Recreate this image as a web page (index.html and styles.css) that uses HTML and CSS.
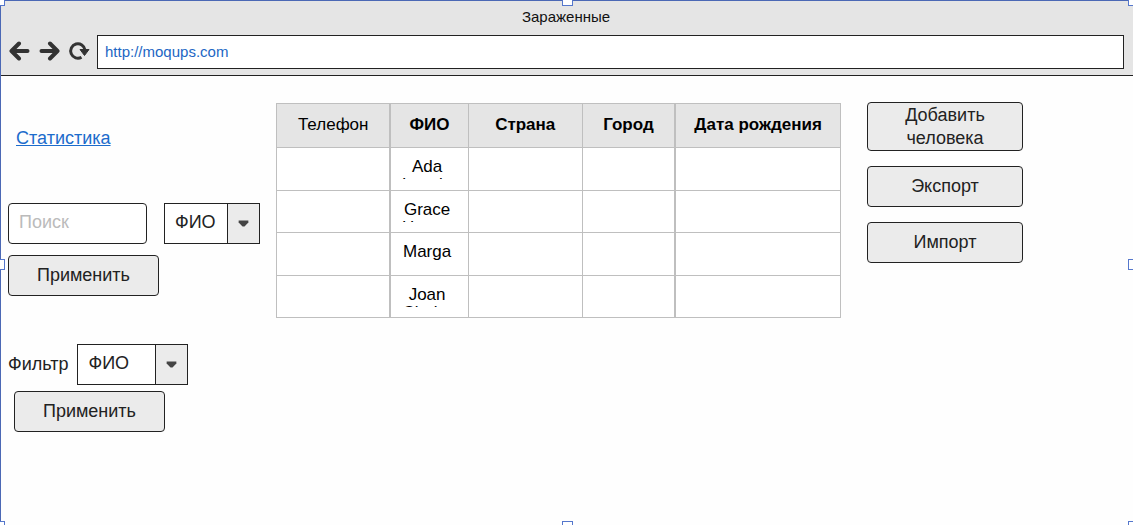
FILE: index.html
```html
<!DOCTYPE html>
<html lang="ru">
<head>
<meta charset="utf-8">
<meta name="viewport" content="width=device-width, initial-scale=1">
<title>Зараженные</title>
<link rel="stylesheet" href="styles.css">
</head>
<body>
<div class="window">
  <header class="browser">
    <h1 class="browser-title">Зараженные</h1>
    <div class="browser-bar">
      <nav class="browser-nav">
        <button class="icon-button" type="button" aria-label="Назад">
          <svg class="icon" viewBox="0 0 22 20"><path d="M19.500 10H4M11 2.500L3.500 10l7.500 7.500"/></svg>
        </button>
        <button class="icon-button" type="button" aria-label="Вперёд">
          <svg class="icon" viewBox="0 0 22 20"><path d="M3.500 10H19M12 2.500L19.500 10 12 17.500"/></svg>
        </button>
        <button class="icon-button" type="button" aria-label="Обновить">
          <svg class="icon icon-reload" viewBox="0 0 22 20"><path d="M13.500 16.200A7.200 7.200 0 1 1 17 9"/><path class="icon-fill" d="M12 8.500h9l-4.500 6z"/></svg>
        </button>
      </nav>
      <input class="address" type="text" value="http://moqups.com" aria-label="Адрес">
    </div>
  </header>

  <main class="page">
    <aside class="sidebar">
      <a class="stats-link" href="#">Статистика</a>
      <form class="search">
        <div class="search-row">
          <input class="search-input" type="text" placeholder="Поиск" aria-label="Поиск">
          <div class="dropdown dropdown-small">
            <select class="dropdown-select" aria-label="Поле поиска"><option>ФИО</option></select>
            <svg class="dropdown-arrow" viewBox="0 0 32 40"><path d="M11 17h10v2l-4 4h-2l-4-4z"/></svg>
          </div>
        </div>
        <button class="button button-apply" type="button">Применить</button>
      </form>
      <form class="filter">
        <div class="filter-row">
          <label class="filter-label" for="filter">Фильтр</label>
          <div class="dropdown dropdown-large">
            <select class="dropdown-select" id="filter"><option>ФИО</option></select>
            <svg class="dropdown-arrow" viewBox="0 0 32 40"><path d="M11 17h10v2l-4 4h-2l-4-4z"/></svg>
          </div>
        </div>
        <button class="button button-apply button-indent" type="button">Применить</button>
      </form>
    </aside>

    <table class="people">
      <colgroup><col class="col-phone"><col class="col-name"><col class="col-country"><col class="col-city"><col class="col-birth"></colgroup>
      <thead>
        <tr><th class="plain thick">Телефон</th><th>ФИО</th><th>Страна</th><th class="thick">Город</th><th>Дата рождения</th></tr>
      </thead>
      <tbody>
        <tr><td class="thick"></td><td><div class="name">Ada Lovelace</div></td><td></td><td class="thick"></td><td></td></tr>
        <tr><td class="thick"></td><td><div class="name">Grace Hopper</div></td><td></td><td class="thick"></td><td></td></tr>
        <tr><td class="thick"></td><td><div class="name">Margaret Hamilton</div></td><td></td><td class="thick"></td><td></td></tr>
        <tr><td class="thick"></td><td><div class="name">Joan Clarke</div></td><td></td><td class="thick"></td><td></td></tr>
      </tbody>
    </table>

    <div class="actions">
      <button class="button button-tall" type="button">Добавить человека</button>
      <button class="button" type="button">Экспорт</button>
      <button class="button" type="button">Импорт</button>
    </div>
  </main>

  <div class="selection" aria-hidden="true">
    <i class="handle top left"></i><i class="handle top center"></i><i class="handle top right"></i>
    <i class="handle middle left"></i><i class="handle middle right"></i>
    <i class="handle bottom left"></i><i class="handle bottom center"></i><i class="handle bottom right"></i>
  </div>
</div>
</body>
</html>
```

FILE: styles.css
```css
* {
  box-sizing: border-box;
}

body {
  margin: 0;
  background: #fefefe;
  color: #222;
  font-family: "Liberation Sans", Arial, sans-serif;
  font-size: 18px;
}

button,
input,
select {
  margin: 0;
  color: inherit;
  font: inherit;
}

.window {
  position: relative;
  min-height: 100vh;
  overflow: hidden;
}

.browser {
  padding: 8px 9px 6px 8px;
  border-bottom: 1px solid #222;
  background: #e5e5e5;
}

.browser-title {
  margin: 0 0 9px;
  color: #111;
  font-size: 15px;
  font-weight: 400;
  line-height: 18px;
  text-align: center;
}

.browser-bar {
  display: flex;
  align-items: center;
  gap: 7px;
}

.browser-nav {
  display: flex;
  gap: 8px;
  padding-bottom: 2px;
}

.icon-button {
  display: block;
  padding: 0;
  border: 0;
  background: none;
}

.icon {
  display: block;
  width: 22px;
  height: 20px;
  fill: none;
  stroke: #333;
  stroke-width: 4;
  stroke-linecap: round;
  stroke-linejoin: round;
}

.icon-reload {
  stroke-width: 3;
  stroke-linecap: butt;
}

.icon-fill {
  fill: #333;
  stroke-width: 1;
}

.address {
  flex: 1;
  min-width: 0;
  height: 34px;
  padding: 0 7px 1px;
  border: 1px solid #222;
  background: #fff;
  color: #2266c4;
  font-size: 15px;
}

.page {
  display: grid;
  grid-template-columns: 252px minmax(0, 565px) 166px;
  align-items: start;
  column-gap: 16px;
  padding: 26px 8px;
}

.sidebar {
  display: flex;
  flex-direction: column;
  align-items: flex-start;
  padding-top: 24px;
}

.stats-link {
  margin: 0 0 53px 8px;
  color: #1c6ccc;
  line-height: 24px;
}

.search-row {
  display: flex;
  gap: 17px;
  margin-bottom: 11px;
}

.search-input {
  width: 139px;
  height: 41px;
  padding: 0 10px 2px;
  border: 1px solid #222;
  border-radius: 4px;
  background: #fff;
}

.search-input::placeholder {
  color: #bbb;
  opacity: 1;
}

.dropdown {
  display: grid;
  grid-template-columns: 1fr 33px;
  height: 41px;
}

.dropdown-small {
  width: 96px;
}

.dropdown-large {
  width: 111px;
}

.dropdown-select {
  grid-area: 1 / 1 / 2 / 3;
  width: 100%;
  padding: 0 10px 3px;
  border: 1px solid #222;
  border-radius: 0;
  background: #fff;
  appearance: none;
}

.dropdown-arrow {
  grid-area: 1 / 2;
  width: 33px;
  height: 41px;
  border: 1px solid #222;
  background: #ebebeb;
  fill: #444;
  pointer-events: none;
}

.button {
  min-height: 41px;
  padding: 0 20px;
  border: 1px solid #222;
  border-radius: 4px;
  background: #ebebeb;
  line-height: 23px;
}

.button-apply {
  width: 151px;
}

.filter {
  margin-top: 48px;
}

.filter-row {
  display: flex;
  align-items: center;
  gap: 9px;
  margin-bottom: 6px;
}

.button-indent {
  margin-left: 6px;
}

.people {
  width: 100%;
  height: 215px;
  border-collapse: collapse;
  table-layout: fixed;
  margin-top: 1px;
  background: #fff;
  color: #000;
  font-size: 17px;
}

.col-phone,
.col-country {
  width: 20.2%;
}

.col-name {
  width: 13.8%;
}

.col-city {
  width: 16.5%;
}

.people th,
.people td {
  padding: 0;
  border: 1px solid #bfbfbf;
  text-align: center;
}

.people th {
  height: 44px;
  padding-bottom: 2px;
  background: #e5e5e5;
}

.people .plain {
  font-weight: 400;
}

.people .thick {
  border-right-width: 2px;
}

.name {
  height: 21px;
  margin: 0 15px 0 10px;
  overflow: hidden;
  line-height: 18px;
  overflow-wrap: break-word;
}

.actions {
  display: flex;
  flex-direction: column;
  gap: 15px;
  padding-left: 10px;
}

.button-tall {
  min-height: 49px;
}

.selection {
  position: absolute;
  inset: 0;
  border: 1px solid #4b68b5;
  border-width: 1px 0 0 1px;
  pointer-events: none;
}

.handle {
  position: absolute;
  width: 11px;
  height: 11px;
  border: 1px solid #5577cc;
  background: #fff;
}

.handle.top {
  top: -6px;
}

.handle.middle {
  top: calc(50% - 4px);
}

.handle.bottom {
  bottom: -7px;
}

.handle.left {
  left: -7px;
}

.handle.center {
  left: calc(50% - 5px);
}

.handle.right {
  right: -6px;
}
```
